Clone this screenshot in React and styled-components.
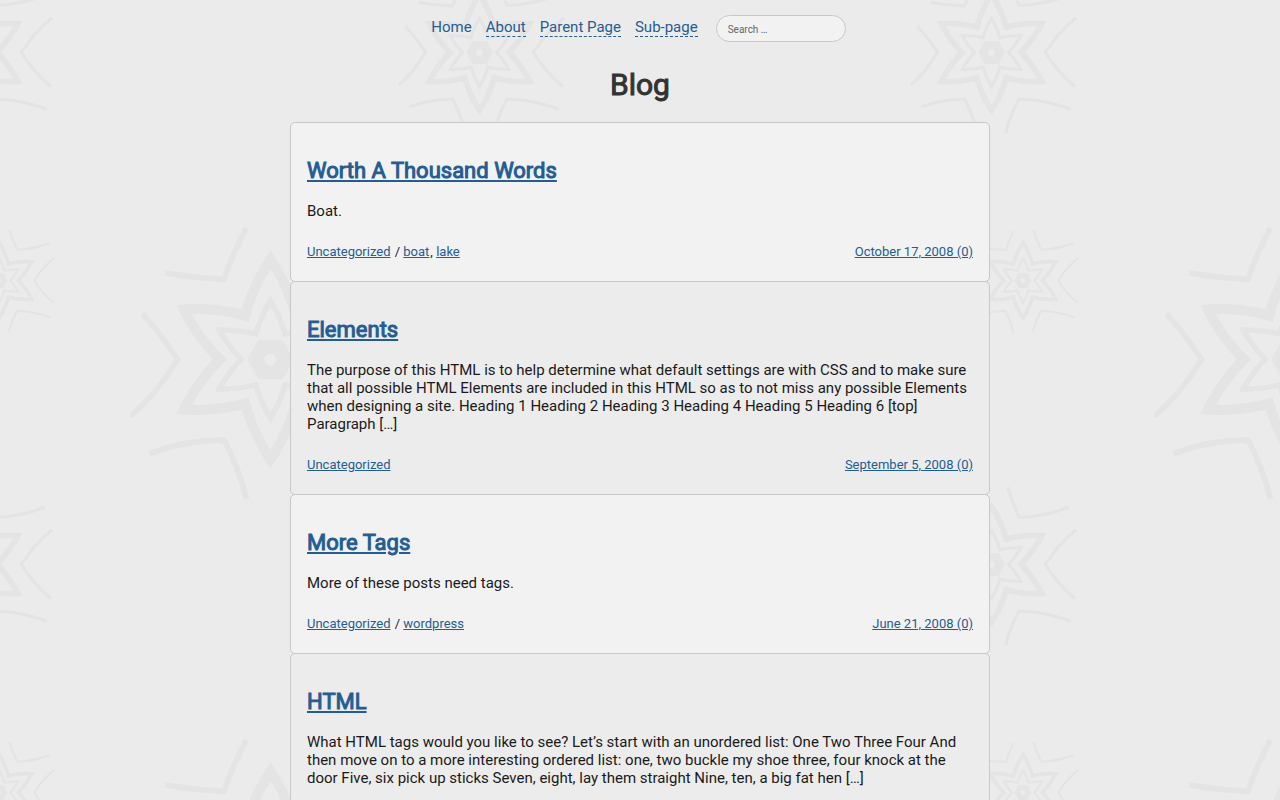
import React from "react";
import styled, { createGlobalStyle } from "styled-components";

const GlobalStyle = createGlobalStyle`
  * { box-sizing: border-box; }
  body {
    margin: 0;
    background: #ebebeb;
    color: #1a1a1a;
    font-family: Roboto, "Liberation Sans", sans-serif;
    font-size: 15px;
    line-height: 18px;
  }
`;

const Page = styled.div`
  position: relative;
  z-index: 0;
  min-height: 100vh;
`;

const Backdrop = styled.svg`
  position: absolute;
  inset: 0;
  width: 100%;
  height: 100%;
  z-index: -1;
`;

const Header = styled.header`
  display: flex;
  justify-content: center;
  gap: 18px;
  padding: 15px 19px 0 16px;
`;

const Menu = styled.nav`
  display: flex;
  gap: 14px;
  padding-top: 3px;
`;

const MenuLink = styled.a`
  height: 19px;
  color: #245d93;
  text-decoration: none;
  border-bottom: ${(p) => (p.$dashed ? "1px dashed #245d93" : "0")};
`;

const SearchInput = styled.input`
  width: 130px;
  height: 27px;
  padding: 2px 11px 0;
  border: 1px solid #c8c8c8;
  border-radius: 14px;
  background: #f2f2f2;
  color: #333;
  font: 10px Roboto, "Liberation Sans", sans-serif;
  &::placeholder { color: #666; opacity: 1; }
`;

const PageTitle = styled.h1`
  margin: 25px 0 19px;
  color: #333;
  font-size: 30px;
  line-height: 36px;
  font-weight: 400;
  text-align: center;
  -webkit-text-stroke: 1px;
`;

const Posts = styled.main`
  max-width: 700px;
  margin: 0 auto;
`;

const Post = styled.article`
  padding: 34px 16px 21px;
  border: 1px solid #c8c8c8;
  border-radius: 5px;
  background: #f2f2f2;
  &:nth-child(even) { background: #ececec; }
  & + & { margin-top: -1px; }
`;

const PostTitle = styled.h2`
  margin: 0 0 18px;
  font-size: 22px;
  line-height: 27px;
  font-weight: 400;
  -webkit-text-stroke: 1px #245d93;
`;

const TextLink = styled.a`
  color: #245d93;
`;

const Excerpt = styled.p`
  margin: 0;
`;

const Meta = styled.footer`
  display: flex;
  justify-content: space-between;
  margin-top: 24px;
  font-size: 13px;
  line-height: 16px;
`;

const Tag = styled(TextLink)`
  margin-right: 1px;
`;

const MENU = ["Home", "About", "Parent Page", "Sub-page"];

const POSTS = [
  { title: "Worth A Thousand Words", text: "Boat.", tags: ["boat", "lake"], date: "October 17, 2008 (0)" },
  {
    title: "Elements",
    text: "The purpose of this HTML is to help determine what default settings are with CSS and to make sure that all possible HTML Elements are included in this HTML so as to not miss any possible Elements when designing a site. Heading 1 Heading 2 Heading 3 Heading 4 Heading 5 Heading 6 [top] Paragraph […]",
    tags: [],
    date: "September 5, 2008 (0)",
  },
  { title: "More Tags", text: "More of these posts need tags.", tags: ["wordpress"], date: "June 21, 2008 (0)" },
  {
    title: "HTML",
    text: "What HTML tags would you like to see? Let’s start with an unordered list: One Two Three Four And then move on to a more interesting ordered list: one, two buckle my shoe three, four knock at the door Five, six pick up sticks Seven, eight, lay them straight Nine, ten, a big fat hen […]",
  },
];

// A closed six-pointed outline whose sides bow outwards by `bow`.
function starPath(tip, notch, bow) {
  const at = (r, deg) => {
    const a = (deg * Math.PI) / 180;
    return [r * Math.cos(a), r * Math.sin(a)];
  };
  const points = [];
  for (let i = 0; i < 12; i++) points.push(at(i % 2 ? notch : tip, -90 + i * 30));
  let d = `M${points[0].join(" ")}`;
  for (let i = 0; i < 12; i++) {
    const [x1, y1] = points[i];
    const [x2, y2] = points[(i + 1) % 12];
    const len = Math.hypot(x2 - x1, y2 - y1);
    const cx = (x1 + x2) / 2 + ((y2 - y1) / len) * bow;
    const cy = (y1 + y2) / 2 - ((x2 - x1) / len) * bow;
    d += `Q${cx} ${cy} ${x2} ${y2}`;
  }
  return d + "Z";
}

const RINGS = starPath(327, 174, 16) + starPath(272, 130, 14) + starPath(193, 100, 8) + starPath(159, 77, 7);
const HUB =
  "M-69 0L-36 -59H36L69 0L36 59H-36Z M18 0A18 18 0 1 0 -18 0A18 18 0 1 0 18 0Z";
const ARMS = [
  "M-384 -136Q-326 -74 -279 0Q-338 98 -419 170",
  "M438 -180Q344 -104 279 0Q342 102 433 179",
  "M-72 -394Q-114 -316 -139 -241Q-226 -244 -317 -260",
  "M84 -402Q110 -314 143 -244Q270 -248 400 -296",
  "M-72 418Q-95 326 -139 242Q-256 242 -363 282",
  "M74 416Q96 326 142 242Q278 244 411 294",
];

function Star({ x, y, scale }) {
  return (
    <g transform={`translate(${x} ${y}) scale(${scale})`}>
      <path d={RINGS} fillRule="evenodd" fill="#e4e4e4" />
      <path d={HUB} fillRule="evenodd" fill="#e4e4e4" />
      {ARMS.map((d) => (
        <path key={d} d={d} fill="none" stroke="#e4e4e4" strokeWidth="17" />
      ))}
    </g>
  );
}

function StarField() {
  return (
    <Backdrop aria-hidden="true">
      <defs>
        <pattern id="stars" width="512" height="512" patternUnits="userSpaceOnUse">
          <Star x={270.5} y={359.5} scale={0.3333} />
          {[-32.5, 479.5].map((x) =>
            [52.5, 564.5].map((y) => <Star key={`${x} ${y}`} x={x} y={y} scale={0.193} />)
          )}
          <Star x={-1} y={280.5} scale={0.126} />
          <Star x={511} y={280.5} scale={0.126} />
        </pattern>
      </defs>
      <rect width="100%" height="100%" fill="url(#stars)" />
    </Backdrop>
  );
}

function PostMeta({ tags, date }) {
  return (
    <Meta>
      <span>
        <Tag href="#">Uncategorized</Tag>
        {tags.length > 0 && " / "}
        {tags.map((tag, i) => (
          <React.Fragment key={tag}>
            {i > 0 && ", "}
            <Tag href="#">{tag}</Tag>
          </React.Fragment>
        ))}
      </span>
      <TextLink href="#">{date}</TextLink>
    </Meta>
  );
}

export default function App() {
  return (
    <Page>
      <GlobalStyle />
      <StarField />
      <Header>
        <Menu aria-label="Main">
          {MENU.map((label, i) => (
            <MenuLink key={label} href="#" $dashed={i > 0}>{label}</MenuLink>
          ))}
        </Menu>
        <form role="search">
          <SearchInput type="search" aria-label="Search" placeholder="Search …" />
        </form>
      </Header>
      <PageTitle>Blog</PageTitle>
      <Posts>
        {POSTS.map((post) => (
          <Post key={post.title}>
            <PostTitle><TextLink href="#">{post.title}</TextLink></PostTitle>
            <Excerpt>{post.text}</Excerpt>
            {post.date && <PostMeta tags={post.tags} date={post.date} />}
          </Post>
        ))}
      </Posts>
    </Page>
  );
}
